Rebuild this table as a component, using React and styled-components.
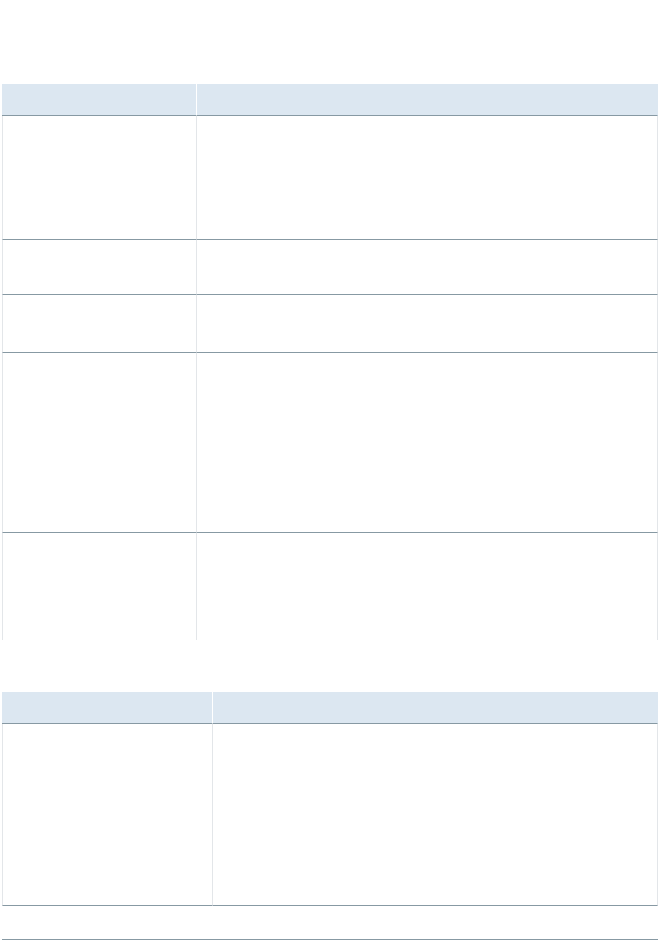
import React from 'react';
import styled, { createGlobalStyle } from 'styled-components';

const GlobalStyle = createGlobalStyle`
  body {
    margin: 0;
    background: #ffffff;
    font-family: "Liberation Sans", Arial, sans-serif;
  }
`;

const Page = styled.div`
  padding: 84px 0 0 2px;
  width: 656px;
  display: flex;
  flex-direction: column;
  gap: 52px;
`;

const Table = styled.table`
  width: 656px;
  table-layout: fixed;
  border-collapse: separate;
  border-spacing: 0;
`;

const HeadCell = styled.th`
  box-sizing: border-box;
  height: 32px;
  padding: 0;
  background: #dce7f1;
  border-bottom: 1px solid #8799a3;
  border-right: 1px solid ${(p) => (p.$first ? '#ffffff' : '#dce7f1')};
  width: ${(p) => p.$width || 'auto'};
`;

const Cell = styled.td`
  box-sizing: border-box;
  height: ${(p) => p.$height}px;
  padding: 0;
  border-left: ${(p) => (p.$first ? '1px solid #e3e6e9' : 'none')};
  border-right: ${(p) => (p.$bare ? 'none' : '1px solid #e3e6e9')};
  border-bottom: ${(p) => (p.$last ? 'none' : '1px solid #8799a3')};
`;

const rowsA = [124, 55, 58, 180, 107];

const App = () => {
  return (
    <>
      <GlobalStyle />
      <Page>
        <Table>
          <thead>
            <tr>
              <HeadCell $first $width="195px"></HeadCell>
              <HeadCell></HeadCell>
            </tr>
          </thead>
          <tbody>
            {rowsA.map((h, i) => (
              <tr key={i}>
                <Cell $first $height={h} $last={i === rowsA.length - 1}></Cell>
                <Cell $height={h} $last={i === rowsA.length - 1}></Cell>
              </tr>
            ))}
          </tbody>
        </Table>

        <Table>
          <thead>
            <tr>
              <HeadCell $first $width="211px"></HeadCell>
              <HeadCell></HeadCell>
            </tr>
          </thead>
          <tbody>
            <tr>
              <Cell $first $height={182}></Cell>
              <Cell $height={182}></Cell>
            </tr>
            <tr>
              <Cell colSpan={2} $bare $height={34}></Cell>
            </tr>
          </tbody>
        </Table>
      </Page>
    </>
  );
};

export default App;
